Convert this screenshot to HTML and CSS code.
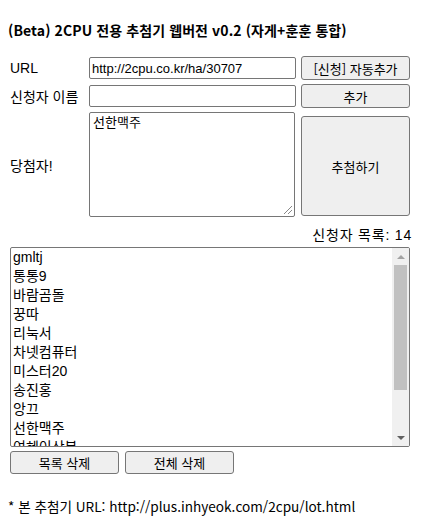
FILE: index.html
```html
<!DOCTYPE html>
<html lang="ko">
<head>
<meta charset="utf-8">
<link rel="stylesheet" href="styles.css">
</head>
<body>
<div class="page">
  <h1 class="title">(Beta) 2CPU 전용 추첨기 웹버전 v0.2 (자게+훈훈 통합)</h1>
  <div class="form">
    <div class="label">URL</div>
    <div class="field"><input class="input" type="text" value="http://2cpu.co.kr/ha/30707"></div>
    <div class="action"><button class="btn">[신청] 자동추가</button></div>

    <div class="label">신청자 이름</div>
    <div class="field"><input class="input" type="text" value=""></div>
    <div class="action"><button class="btn">추가</button></div>

    <div class="label">당첨자!</div>
    <div class="field"><div class="textarea">선한맥주<span class="grip"></span></div></div>
    <div class="action"><button class="btn btn-big">추첨하기</button></div>
  </div>

  <div class="count">신청자 목록: 14</div>

  <div class="listbox">
    <ul class="items">
      <li>gmltj</li>
      <li>통통9</li>
      <li>바람곰돌</li>
      <li>꿍따</li>
      <li>리눅서</li>
      <li>차넷컴퓨터</li>
      <li>미스터20</li>
      <li>송진홍</li>
      <li>앙끄</li>
      <li>선한맥주</li>
      <li>여혜이상봉</li>
    </ul>
    <div class="scrollbar">
      <div class="arrow"><span class="tri-up"></span></div>
      <div class="track"><div class="thumb"></div></div>
      <div class="arrow"><span class="tri-down"></span></div>
    </div>
  </div>

  <div class="bottom-buttons">
    <button class="btn btn-wide">목록 삭제</button>
    <button class="btn btn-wide">전체 삭제</button>
  </div>

  <p class="footer">* 본 추첨기 URL: http://plus.inhyeok.com/2cpu/lot.html</p>
</div>
</body>
</html>
```

FILE: styles.css
```css
html, body {
  margin: 0;
  padding: 0;
  background: #ffffff;
}
body {
  padding: 8px;
  font-family: "Liberation Sans", "Noto Sans CJK KR", sans-serif;
  font-size: 13px;
  color: #000;
}
.page {
  width: 402px;
  padding-left: 2px;
}
.title {
  font-family: "Noto Sans CJK KR", "Open Sans", sans-serif;
  font-size: 14px;
  font-weight: bold;
  line-height: 18px;
  margin: 13px 0 0 -2px;
  letter-spacing: 0.1px;
}
.form {
  margin-top: 17px;
  display: grid;
  grid-template-columns: 79px 212px 109px;
  grid-template-rows: 24px 24px 105px;
  row-gap: 4px;
  align-items: center;
}
.label {
  font-family: "Liberation Sans", "Noto Sans CJK KR", sans-serif;
  font-size: 14px;
}
.field {
  display: flex;
  align-items: center;
  height: 100%;
}
.input {
  box-sizing: border-box;
  width: 207px;
  height: 22px;
  border: 1px solid #767676;
  border-radius: 2px;
  padding: 0 2px;
  font-family: "Liberation Sans", "Noto Sans CJK KR", sans-serif;
  font-size: 13px;
  color: #000;
  background: #fff;
  margin: 0;
}
.textarea {
  position: relative;
  box-sizing: border-box;
  width: 206px;
  height: 105px;
  border: 1px solid #767676;
  border-radius: 2px;
  padding: 0 3px;
  font-family: "Noto Sans CJK KR", sans-serif;
  font-size: 13px;
  line-height: 17px;
}
.grip {
  position: absolute;
  right: 2px;
  bottom: 2px;
  width: 8px;
  height: 8px;
  background:
    linear-gradient(135deg, transparent 45%, #888 45%, #888 52%, transparent 52%, transparent 70%, #888 70%, #888 77%, transparent 77%);
}
.action {
  display: flex;
  align-items: center;
  height: 100%;
}
.btn {
  box-sizing: border-box;
  width: 109px;
  height: 24px;
  margin: 0;
  border: 1px solid #767676;
  border-radius: 3px;
  background: #efefef;
  font-family: "Noto Sans CJK KR", "Liberation Sans", sans-serif;
  font-size: 13px;
  color: #000;
  padding: 0;
}
.btn-big {
  height: 100px;
  margin-top: 3px;
}
.count {
  text-align: right;
  font-family: "Liberation Sans", "Noto Sans CJK KR", sans-serif;
  font-size: 14px;
  letter-spacing: 0.8px;
  line-height: 18px;
  margin-top: 9px;
}
.listbox {
  box-sizing: border-box;
  margin-top: 3px;
  width: 400px;
  height: 200px;
  border: 1px solid #767676;
  border-radius: 2px;
  display: flex;
  overflow: hidden;
}
.items {
  flex: 1;
  list-style: none;
  margin: 0;
  padding: 0 0 0 2px;
  overflow: hidden;
  font-family: "Liberation Sans", "Noto Sans CJK KR", sans-serif;
  font-size: 14px;
}
.items li {
  height: 19px;
  line-height: 19px;
  white-space: nowrap;
}
.scrollbar {
  width: 17px;
  background: #f0f0f0;
  display: flex;
  flex-direction: column;
}
.arrow {
  height: 17px;
  display: flex;
  align-items: center;
  justify-content: center;
}
.tri-up {
  width: 0;
  height: 0;
  border-left: 4px solid transparent;
  border-right: 4px solid transparent;
  border-bottom: 4px solid #a3a3a3;
}
.tri-down {
  width: 0;
  height: 0;
  border-left: 4px solid transparent;
  border-right: 4px solid transparent;
  border-top: 4px solid #606060;
}
.track {
  flex: 1;
  padding: 0 2px;
}
.thumb {
  height: 125px;
  background: #c1c1c1;
}
.bottom-buttons {
  display: flex;
  gap: 6px;
  margin-top: 4px;
}
.btn-wide {
  width: 109px;
  height: 23px;
  border-radius: 3px;
}
.footer {
  margin: 23px 0 0 -2px;
  font-family: "Noto Sans CJK KR", "Open Sans", sans-serif;
  font-size: 13.6px;
  line-height: 18px;
}
```
